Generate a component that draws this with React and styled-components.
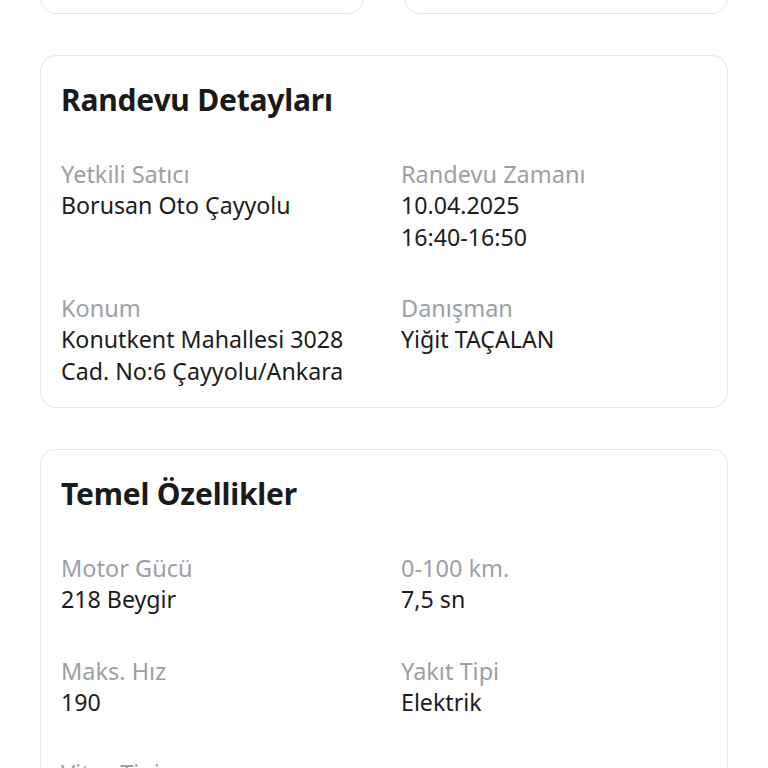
import styled, { createGlobalStyle } from "styled-components"

const GlobalStyle = createGlobalStyle`
html, body {
margin: 0;
padding: 0;
background: #ffffff;
font-family: "Noto Sans", "Open Sans", sans-serif;
}
`

const appointment = [
    { label: "Yetkili Satıcı", value: ["Borusan Oto Çayyolu"] },
    { label: "Randevu Zamanı", value: ["10.04.2025", "16:40-16:50"] },
    { label: "Konum", value: ["Konutkent Mahallesi 3028", "Cad. No:6 Çayyolu/Ankara"] },
    { label: "Danışman", value: ["Yiğit TAÇALAN"] },
]

const features = [
    { label: "Motor Gücü", value: ["218 Beygir"] },
    { label: "0-100 km.", value: ["7,5 sn"] },
    { label: "Maks. Hız", value: ["190"] },
    { label: "Yakıt Tipi", value: ["Elektrik"] },
    { label: "Vites Tipi", value: ["Otomatik"] },
]

const InfoCard = ({ title, items }) => {
    return (
        <Card>
            <Title>{title}</Title>
            <Grid>
                {items.map((item) => (
                    <Item key={item.label}>
                        <Label>{item.label}</Label>
                        {item.value.map((line) => (
                            <Value key={line}>{line}</Value>
                        ))}
                    </Item>
                ))}
            </Grid>
        </Card>
    )
}

const App = () => {
    return (
        <Page>
            <GlobalStyle />
            <TopRow>
                <SmallCard />
                <SmallCard />
            </TopRow>
            <InfoCard title="Randevu Detayları" items={appointment} />
            <InfoCard title="Temel Özellikler" items={features} />
        </Page>
    )
}

export default App


const Page = styled.div`
display: flex;
flex-direction: column;
gap: 41px;
padding: 0 40px 40px 40px;
margin-top: -106px;
`

const TopRow = styled.div`
display: grid;
grid-template-columns: 1fr 1fr;
gap: 40px;
`

const SmallCard = styled.div`
height: 118px;
border: 1.5px solid #e6e6e6;
border-radius: 16px;
`

const Card = styled.div`
border: 1.5px solid #e6e6e6;
border-radius: 16px;
padding: 26px 20px 20px 20px;
`

const Title = styled.h2`
margin: 0;
font-size: 30px;
line-height: 36px;
font-weight: 700;
color: #1a1a1a;
letter-spacing: -0.2px;
`

const Grid = styled.div`
display: grid;
grid-template-columns: 1fr 1fr;
column-gap: 34px;
row-gap: 39px;
margin-top: 40px;
`

const Item = styled.div`
display: flex;
flex-direction: column;
`

const Label = styled.div`
font-size: 23.5px;
line-height: 32px;
color: #9ba0a5;
`

const Value = styled.div`
font-size: 23.2px;
line-height: 31.5px;
color: #1c1c1c;
`
